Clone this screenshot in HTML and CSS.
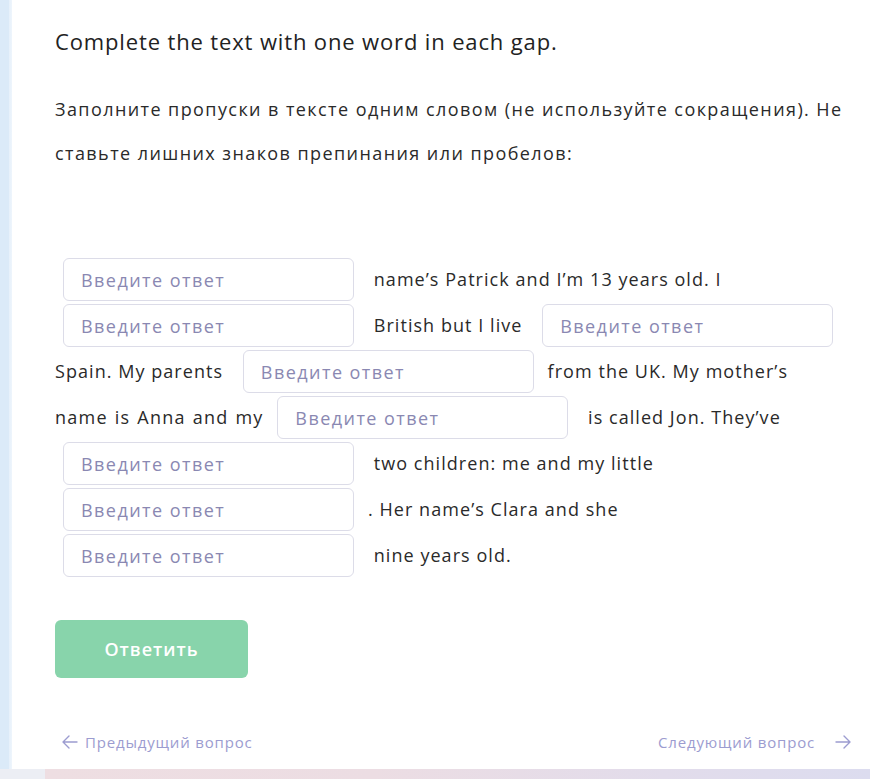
FILE: index.html
```html
<!DOCTYPE html>
<html lang="ru">
<head>
<meta charset="utf-8">
<link rel="stylesheet" href="styles.css">
</head>
<body>
<div class="page">
  <div class="main">
    <div class="side"></div>
    <div class="card">
      <h1 class="title">Complete the text with one word in each gap.</h1>
      <p class="hint">Заполните пропуски в тексте одним словом (не используйте сокращения). Не ставьте лишних знаков препинания или пробелов:</p>
      <div class="blanks"><input class="gap" placeholder="Введите ответ"> <span>name’s Patrick and I’m 13 years old. I</span> <input class="gap" placeholder="Введите ответ"> <span>British but I live</span> <input class="gap gap-wl gap-end" placeholder="Введите ответ"> <span>Spain. My parents</span> <input class="gap gap-wl gap-nr" placeholder="Введите ответ"> <span>from the UK. My mother’s</span> <span class="wide">name is Anna and my</span> <input class="gap" placeholder="Введите ответ"> <span>is called Jon. They’ve</span> <input class="gap" placeholder="Введите ответ"> <span>two children: me and my little</span> <input class="gap" placeholder="Введите ответ"><span>. Her name’s Clara and she</span> <input class="gap" placeholder="Введите ответ"> <span>nine years old.</span></div>
      <button class="submit">Ответить</button>
      <div class="nav">
        <a class="nav-link prev"><svg width="16" height="14" viewBox="0 0 16 14"><path d="M15 7H1.5M7 1L1 7l6 6" fill="none" stroke="currentColor" stroke-width="1.4" stroke-linecap="round" stroke-linejoin="round"/></svg>Предыдущий вопрос</a>
        <a class="nav-link next">Следующий вопрос<svg width="16" height="14" viewBox="0 0 16 14"><path d="M1 7h13.5M9 1l6 6-6 6" fill="none" stroke="currentColor" stroke-width="1.4" stroke-linecap="round" stroke-linejoin="round"/></svg></a>
      </div>
    </div>
  </div>
  <div class="bottom">
    <div class="bottom-left"></div>
    <div class="bottom-right"></div>
  </div>
</div>
</body>
</html>
```
FILE: styles.css
```css
html, body {
  margin: 0;
  padding: 0;
  height: 779px;
  overflow: hidden;
  background: #fff;
}
body {
  font-family: "Open Sans", "DejaVu Sans", sans-serif;
  color: #2a2a2a;
}
.page {
  display: flex;
  flex-direction: column;
  height: 779px;
}
.main {
  display: flex;
  height: 769px;
}
.side {
  width: 12px;
  flex: none;
  background: linear-gradient(90deg, #dbeaf8 0, #dbeaf8 9px, #e6f0fa 9px, #eef5fc 12px);
}
.card {
  flex: 1;
  background: #fff;
  padding: 26px 20px 0 43px;
  box-sizing: border-box;
}
.title {
  margin: 0;
  font-size: 22px;
  font-weight: 400;
  line-height: 30px;
  color: #222;
  letter-spacing: 0.86px;
}
.hint {
  margin: 31px 0 0;
  font-size: 18px;
  line-height: 44px;
  color: #2a2a2a;
  letter-spacing: 1.42px;
}
.blanks {
  width: 785px;
  margin-top: 81px;
  font-size: 18px;
  line-height: 46px;
  color: #2a2a2a;
  letter-spacing: 1.05px;
}
.wide {
  word-spacing: 1px;
  letter-spacing: 1.25px;
}
.gap {
  display: inline-block;
  width: 291px;
  height: 43px;
  box-sizing: border-box;
  margin: 2px 14px 0 8px;
  padding: 0 17px;
  border: 1px solid #dcdce8;
  border-radius: 6px;
  background: #fff;
  font-family: inherit;
  font-size: 18px;
  letter-spacing: 1.45px;
  color: #2a2a2a;
  vertical-align: top;
  outline: none;
}
.gap-wl {
  margin-left: 14px;
}
.gap-nr {
  margin-right: 8px;
}
.gap-end {
  margin-right: 0;
}
.gap::placeholder {
  color: #8a88b2;
  opacity: 1;
}
.submit {
  display: block;
  margin-top: 42px;
  width: 193px;
  height: 58px;
  border: none;
  border-radius: 6px;
  background: #88d4ab;
  color: #fff;
  font-family: inherit;
  font-size: 18px;
  font-weight: 600;
  letter-spacing: 1.0px;
}
.nav {
  display: flex;
  justify-content: space-between;
  align-items: center;
  margin-top: 54px;
  padding: 0 0 0 7px;
  line-height: 20px;
}
.nav-link {
  display: flex;
  align-items: center;
  gap: 7px;
  font-size: 15px;
  color: #9c9cd0;
  letter-spacing: 0.82px;
}
.nav-link.next {
  gap: 20px;
  margin-right: -1px;
}
.bottom {
  display: flex;
  height: 10px;
}
.bottom-left {
  width: 45px;
  background: #eceef4;
}
.bottom-right {
  flex: 1;
  background: linear-gradient(90deg, #eedee2 0%, #ecdde3 40%, #e2dceb 75%, #dcdcef 100%);
}
```
